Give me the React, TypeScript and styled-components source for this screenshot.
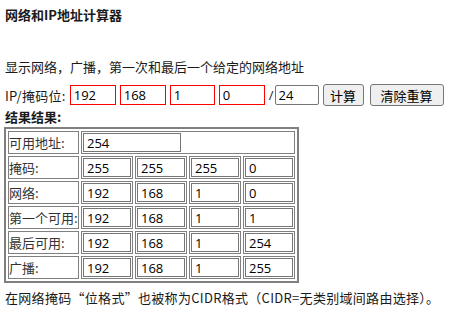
import React from "react";
import styled, { createGlobalStyle } from "styled-components";

const Global = createGlobalStyle`
  html, body { margin: 0; padding: 0; background: #fff; }
  body {
    font-family: "Open Sans", "Noto Sans CJK SC", sans-serif;
    font-size: 13px;
    color: #1a1a1a;
  }
`;

const Page = styled.div`
  padding: 7px 5px 0 5px;
`;

const Title = styled.h1`
  margin: 0;
  font-size: 13px;
  font-weight: bold;
  line-height: 16px;
  font-family: "Noto Sans CJK SC", sans-serif;
`;

const Desc = styled.p`
  margin: 35px 0 0 0;
  line-height: 18px;
  font-family: "Noto Sans CJK SC", sans-serif;
`;

const FormRow = styled.div`
  display: flex;
  align-items: center;
  margin-top: 8px;
  height: 22px;
  white-space: nowrap;
  & > * { flex-shrink: 0; }
`;

const FormLabel = styled.span`
  font-family: "Noto Sans CJK SC", sans-serif;
  letter-spacing: 0.3px;
  margin-right: 4px;
  white-space: nowrap;
`;

const Field = styled.input<{ $w: number; $red?: boolean }>`
  box-sizing: border-box;
  width: ${(p) => p.$w}px;
  height: 20px;
  margin-right: 4px;
  padding: 0 3px;
  border: 1px solid ${(p) => (p.$red ? "#ff0000" : "#767676")};
  border-radius: ${(p) => (p.$red ? "0" : "2px")};
  font-family: "Open Sans", sans-serif;
  font-size: 13px;
  color: #000;
  background: #fff;
  outline: none;
`;

const Slash = styled.span`
  margin: 0 1px 0 0;
`;

const Button = styled.button<{ $w: number }>`
  box-sizing: border-box;
  width: ${(p) => p.$w}px;
  height: 22px;
  margin-right: 6px;
  padding: 0;
  border: 1px solid #767676;
  border-radius: 3px;
  background: #efefef;
  font-family: "Noto Sans CJK SC", sans-serif;
  font-size: 13px;
  color: #000;
`;

const ResultsTitle = styled.div`
  margin-top: 3px;
  font-weight: bold;
  line-height: 16px;
  font-family: "Noto Sans CJK SC", sans-serif;
`;

const Table = styled.table`
  border: 2px solid #808080;
  border-collapse: separate;
  border-spacing: 2px;
  margin-top: 2px;
  margin-left: -1px;
`;

const LabelCell = styled.td`
  box-sizing: border-box;
  width: 71px;
  height: 23px;
  padding: 0;
  border: 1px solid #808080;
  font-family: "Noto Sans CJK SC", sans-serif;
  font-size: 13px;
  color: #333;
  white-space: nowrap;
`;

const DataCell = styled.td`
  padding: 1px;
  border: 1px solid #808080;
  height: 19px;
`;

const CellInput = styled.input<{ $w: number }>`
  display: block;
  box-sizing: border-box;
  width: ${(p) => p.$w}px;
  height: 19px;
  padding: 0 3px;
  border: 1px solid #767676;
  font-family: "Open Sans", sans-serif;
  font-size: 13px;
  color: #000;
  background: #fff;
  outline: none;
`;

const Footer = styled.p`
  margin: 6px 0 0 0;
  line-height: 18px;
  letter-spacing: 0.3px;
  font-family: "Noto Sans CJK SC", sans-serif;
`;

const rows: [string, string[]][] = [
  ["掩码:", ["255", "255", "255", "0"]],
  ["网络:", ["192", "168", "1", "0"]],
  ["第一个可用:", ["192", "168", "1", "1"]],
  ["最后可用:", ["192", "168", "1", "254"]],
  ["广播:", ["192", "168", "1", "255"]],
];

export default function App() {
  return (
    <>
      <Global />
      <Page>
        <Title>网络和IP地址计算器</Title>
        <Desc>显示网络，广播，第一次和最后一个给定的网络地址</Desc>
        <FormRow>
          <FormLabel>IP/掩码位:</FormLabel>
          <Field $w={46} $red defaultValue="192" />
          <Field $w={46} $red defaultValue="168" />
          <Field $w={45} $red defaultValue="1" />
          <Field $w={46} $red defaultValue="0" />
          <Slash>/</Slash>
          <Field $w={44} defaultValue="24" />
          <Button $w={41}>计算</Button>
          <Button $w={74}>清除重算</Button>
        </FormRow>
        <ResultsTitle>结果结果:</ResultsTitle>
        <Table>
          <tbody>
            <tr>
              <LabelCell>可用地址:</LabelCell>
              <DataCell colSpan={4}>
                <CellInput $w={98} defaultValue="254" />
              </DataCell>
            </tr>
            {rows.map(([label, vals]) => (
              <tr key={label}>
                <LabelCell>{label}</LabelCell>
                {vals.map((v, i) => (
                  <DataCell key={i}>
                    <CellInput $w={48} defaultValue={v} />
                  </DataCell>
                ))}
              </tr>
            ))}
          </tbody>
        </Table>
        <Footer>在网络掩码“位格式”也被称为CIDR格式（CIDR=无类别域间路由选择）。</Footer>
      </Page>
    </>
  );
}
